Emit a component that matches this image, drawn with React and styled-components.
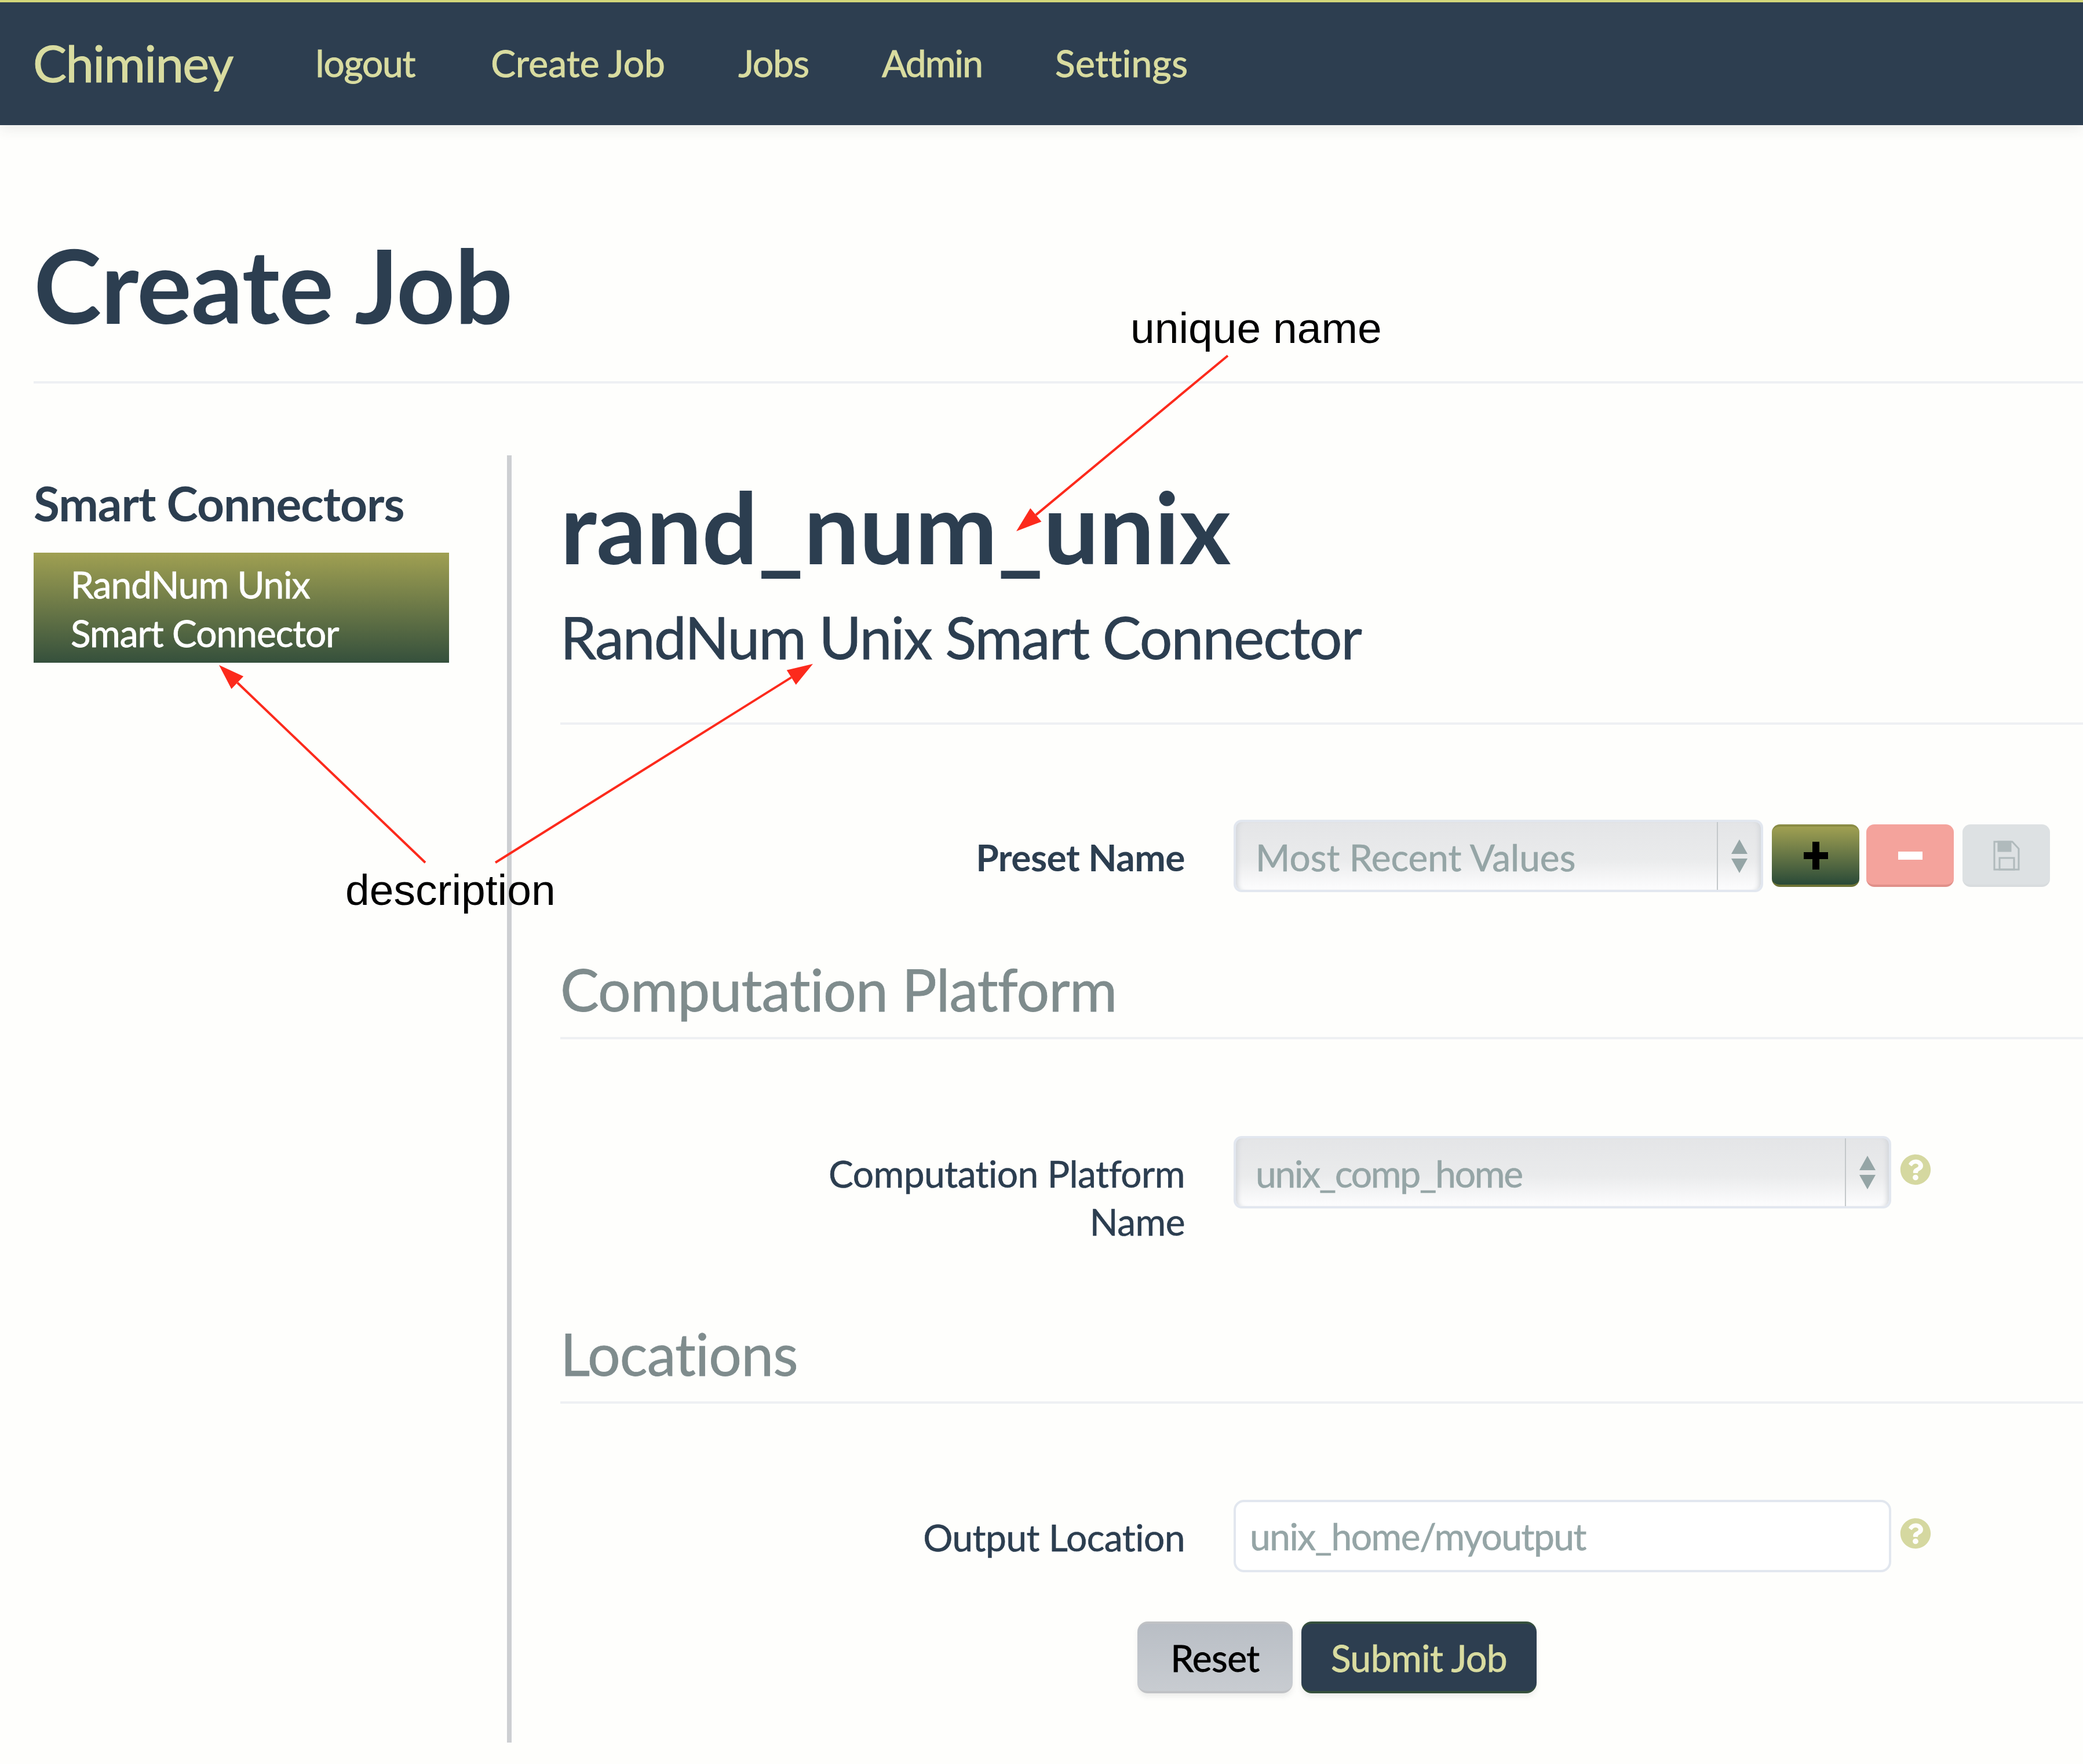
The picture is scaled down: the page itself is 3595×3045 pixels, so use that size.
import React from 'react';
import styled, { createGlobalStyle } from 'styled-components';
import { FaQuestionCircle } from 'react-icons/fa';

const GlobalStyle = createGlobalStyle`
  html, body {
    margin: 0;
    padding: 0;
    background: #fefefc;
  }
  body {
    font-family: Lato, "Open Sans", sans-serif;
    color: #2c3e50;
  }
  #root {
    position: relative;
    height: 3045px;
    overflow: hidden;
  }
  * { box-sizing: border-box; }
`;

const NavBar = styled.nav`
  display: flex;
  align-items: center;
  height: 216px;
  padding: 0 0 4px 57px;
  background: #2d3e50;
  border-top: 4px solid #d3d77a;
  box-shadow: 0 6px 22px rgba(60, 70, 70, 0.1);
`;
const Brand = styled.div`
  font-size: 87px;
  color: #d9dca0;
  margin-right: 143px;
  letter-spacing: -1.7px;
  -webkit-text-stroke: 1px #d9dca0;
`;
const NavLinks = styled.div`
  display: flex;
  gap: 126px;
`;
const NavLink = styled.a`
  font-size: 64px;
  color: #d9dca0;
  letter-spacing: ${p => p.$track}px;
  -webkit-text-stroke: 1px #d9dca0;
  &:first-child { margin-right: 5px; }
`;

const PageHead = styled.header`
  margin: 0 0 124px 58px;
  padding: 175px 0 67px;
  border-bottom: 4px solid #eef0f3;
`;
const PageTitle = styled.h1`
  margin: 0;
  font-size: 177px;
  line-height: 200px;
  font-weight: 700;
  letter-spacing: -1px;
`;

const Columns = styled.div`
  display: flex;
  height: 2222px;
`;
const Sidebar = styled.aside`
  flex: none;
  width: 883px;
  padding: 32px 100px 0 58px;
  border-right: 8px solid #cdcfd2;
`;
const SideHeading = styled.h3`
  margin: 0 0 36px;
  font-size: 82px;
  line-height: 100px;
  font-weight: 700;
  letter-spacing: -1px;
`;
const SideItem = styled.div`
  height: 190px;
  padding: 13px 0 0 64px;
  font-size: 64px;
  line-height: 84px;
  color: #fff;
  letter-spacing: -1px;
  -webkit-text-stroke: 0.8px #fff;
  background: linear-gradient(#a0a052, #35503c);
`;

const Main = styled.main`
  flex: 1;
  padding: 37px 0 0 84px;
`;
const ConnectorHead = styled.div`
  padding-bottom: 92px;
  border-bottom: 4px solid #eef0f3;
`;
const ConnectorName = styled.h1`
  margin: 0 0 51px;
  font-size: 170px;
  line-height: 170px;
  font-weight: 700;
`;
const ConnectorDesc = styled.h2`
  margin: 0 0 1px;
  font-size: 100px;
  line-height: 110px;
  font-weight: 400;
  letter-spacing: -1.9px;
  -webkit-text-stroke: 0.8px #2c3e50;
`;
const SectionHead = styled.h2`
  margin: ${p => p.$top}px 0 0;
  padding-bottom: 35px;
  font-size: 100px;
  line-height: 96px;
  font-weight: 400;
  letter-spacing: -0.8px;
  color: #7f8c8d;
  -webkit-text-stroke: 0.8px #7f8c8d;
  border-bottom: 4px solid #eef0f3;
`;
const FormRow = styled.div`
  display: grid;
  grid-template-columns: 1078px auto;
  column-gap: 84px;
  margin-top: ${p => p.$top}px;
`;
const FieldLabel = styled.label`
  padding-top: 23px;
  font-size: 64px;
  line-height: 83px;
  text-align: right;
  font-weight: ${p => (p.$bold ? 700 : 400)};
  letter-spacing: -0.5px;
  -webkit-text-stroke: ${p => (p.$bold ? 0 : 0.6)}px #2c3e50;
`;
const Controls = styled.div`
  display: flex;
  align-items: flex-start;
`;
const SelectBox = styled.div`
  display: flex;
  align-items: stretch;
  width: ${p => p.$width}px;
  height: 125px;
  border: 4px solid #e2e7ef;
  border-radius: 14px;
  background: linear-gradient(#e4e5e7 0%, #eaebec 55%, #fdfdfe 100%);
  box-shadow: inset 9px 0 8px -6px #d2d5d9, inset -9px 0 8px -6px #d2d5d9;
  font-size: 64px;
  color: #95a5a6;
`;
const SelectValue = styled.div`
  flex: 1;
  padding: 19px 0 0 34px;
  line-height: 83px;
  letter-spacing: ${p => p.$track}px;
  -webkit-text-stroke: 0.6px #95a5a6;
`;
const SelectCaret = styled.div`
  flex: none;
  width: 76px;
  display: flex;
  align-items: center;
  justify-content: center;
  border-left: 2px solid #c4c8ca;
`;
const IconButton = styled.button`
  display: flex;
  align-items: center;
  justify-content: center;
  width: 151px;
  height: 108px;
  margin: 8px 0 0 ${p => p.$gap}px;
  padding: 0;
  border: 0;
  border-radius: 14px;
  background: ${p => p.$bg};
  border-top: 4px solid ${p => p.$top};
  border-bottom: 4px solid ${p => p.$edge};
`;
const HelpIcon = styled(FaQuestionCircle)`
  flex: none;
  width: 54px;
  height: 54px;
  margin: ${p => p.$top}px 0 0 15px;
  color: #d5d8a0;
`;
const TextField = styled.input`
  display: block;
  width: 1135px;
  height: 125px;
  padding: 0 0 0 24px;
  border: 4px solid #e2e7ef;
  border-radius: 18px;
  background: #fff;
  font: 400 64px Lato, sans-serif;
  color: #95a5a6;
  letter-spacing: -1.5px;
  -webkit-text-stroke: 0.6px #95a5a6;
  outline: none;
`;
const Actions = styled.div`
  display: flex;
  gap: 15px;
  margin-top: 85px;
  padding-left: 996px;
`;
const ActionButton = styled.button`
  height: 124px;
  width: ${p => p.$width}px;
  padding: 0;
  border: 0;
  border-radius: 18px;
  font: 400 64px Lato, sans-serif;
  letter-spacing: -0.5px;
  color: ${p => (p.$primary ? '#d9dca0' : '#000')};
  -webkit-text-stroke: 0.8px ${p => (p.$primary ? '#d9dca0' : '#000')};
  background: ${p => (p.$primary ? '#2d3e50' : 'linear-gradient(#b9bec5, #c8ccd1)')};
  border-top: 4px solid ${p => (p.$primary ? '#35503c' : '#c0c2c5')};
  border-bottom: 4px solid ${p => (p.$primary ? '#35503c' : '#c0c2c5')};
  box-shadow: 0 6px 8px rgba(120, 125, 125, 0.12);
`;

const ArrowLayer = styled.svg`
  position: absolute;
  top: 0;
  left: 0;
  pointer-events: none;
`;
const Note = styled.div`
  position: absolute;
  left: ${p => p.$x}px;
  top: ${p => p.$y}px;
  font: 400 75px/90px "Liberation Sans", Arial, sans-serif;
  color: #000;
`;

const SortCaret = () => (
  <svg width="30" height="58" viewBox="0 0 30 58">
    <path d="M15 0 L29 25 L1 25 Z M1 33 L29 33 L15 58 Z" fill="#95a5a6" />
  </svg>
);
const PlusGlyph = () => (
  <svg width="42" height="48" viewBox="0 0 42 48">
    <path d="M15 0 H27 V18 H42 V30 H27 V48 H15 V30 H0 V18 H15 Z" fill="#000" />
  </svg>
);
const MinusGlyph = () => (
  <svg width="42" height="14" viewBox="0 0 42 14">
    <rect width="42" height="14" fill="#fff" />
  </svg>
);
const SaveGlyph = () => (
  <svg width="46" height="52" viewBox="0 0 46 52" fill="none" stroke="#b0babc" strokeWidth="3">
    <path d="M2 2 H33 L44 14 V50 H2 Z" />
    <path d="M11 30 H36 V50 H11 Z" />
    <path d="M9 2 H30 V18 H9 Z" fill="#b0babc" />
  </svg>
);

function Arrow({ x1, y1, x2, y2, head = 44, spread = 15 }) {
  const len = Math.hypot(x2 - x1, y2 - y1);
  const ux = (x2 - x1) / len;
  const uy = (y2 - y1) / len;
  const bx = x2 - ux * head;
  const by = y2 - uy * head;
  const pts = `${x2},${y2} ${bx - uy * spread},${by + ux * spread} ${bx + uy * spread},${by - ux * spread}`;
  return (
    <g>
      <line x1={x1} y1={y1} x2={bx} y2={by} stroke="#fc2a1c" strokeWidth="4" />
      <polygon points={pts} fill="#fc2a1c" />
    </g>
  );
}

export default function App() {
  return (
    <>
      <GlobalStyle />
      <NavBar>
        <Brand>Chiminey</Brand>
        <NavLinks>
          <NavLink $track={-1.2}>logout</NavLink>
          <NavLink $track={0.2}>Create Job</NavLink>
          <NavLink $track={-1}>Jobs</NavLink>
          <NavLink $track={-1.8}>Admin</NavLink>
          <NavLink $track={0.4}>Settings</NavLink>
        </NavLinks>
      </NavBar>

      <PageHead>
        <PageTitle>Create Job</PageTitle>
      </PageHead>

      <Columns>
        <Sidebar>
          <SideHeading>Smart Connectors</SideHeading>
          <SideItem>
            RandNum Unix<br />Smart Connector
          </SideItem>
        </Sidebar>

        <Main>
          <ConnectorHead>
            <ConnectorName>rand_num_unix</ConnectorName>
            <ConnectorDesc>RandNum Unix Smart Connector</ConnectorDesc>
          </ConnectorHead>

          <FormRow $top={164}>
            <FieldLabel $bold>Preset Name</FieldLabel>
            <Controls>
              <SelectBox $width={914}>
                <SelectValue $track={0}>Most Recent Values</SelectValue>
                <SelectCaret><SortCaret /></SelectCaret>
              </SelectBox>
              <IconButton $gap={15} $bg="linear-gradient(#a0a052, #2a4a38)" $top="#8a8c45" $edge="#6d7336"><PlusGlyph /></IconButton>
              <IconButton $gap={12} $bg="#f4a39c" $top="#f4a39c" $edge="#e09089"><MinusGlyph /></IconButton>
              <IconButton $gap={15} $bg="#dde1e3" $top="#dde1e3" $edge="#d8dcde"><SaveGlyph /></IconButton>
            </Controls>
          </FormRow>

          <SectionHead $top={119}>Computation Platform</SectionHead>
          <FormRow $top={167}>
            <FieldLabel>Computation Platform<br />Name</FieldLabel>
            <Controls>
              <SelectBox $width={1135}>
                <SelectValue $track={-2.2}>unix_comp_home</SelectValue>
                <SelectCaret><SortCaret /></SelectCaret>
              </SelectBox>
              <HelpIcon $top={31} />
            </Controls>
          </FormRow>

          <SectionHead $top={138}>Locations</SectionHead>
          <FormRow $top={166}>
            <FieldLabel>Output Location</FieldLabel>
            <Controls>
              <TextField readOnly value="unix_home/myoutput" />
              <HelpIcon $top={31} />
            </Controls>
          </FormRow>

          <Actions>
            <ActionButton $width={268}>Reset</ActionButton>
            <ActionButton $width={406} $primary>Submit Job</ActionButton>
          </Actions>
        </Main>
      </Columns>

      <ArrowLayer width="3595" height="3045">
        <Arrow x1={2119} y1={614} x2={1754} y2={917} />
        <Arrow x1={734} y1={1489} x2={378} y2={1148} />
        <Arrow x1={855} y1={1489} x2={1403} y2={1146} />
      </ArrowLayer>
      <Note $x={1951} $y={521}>unique name</Note>
      <Note $x={596} $y={1491}>description</Note>
    </>
  );
}
